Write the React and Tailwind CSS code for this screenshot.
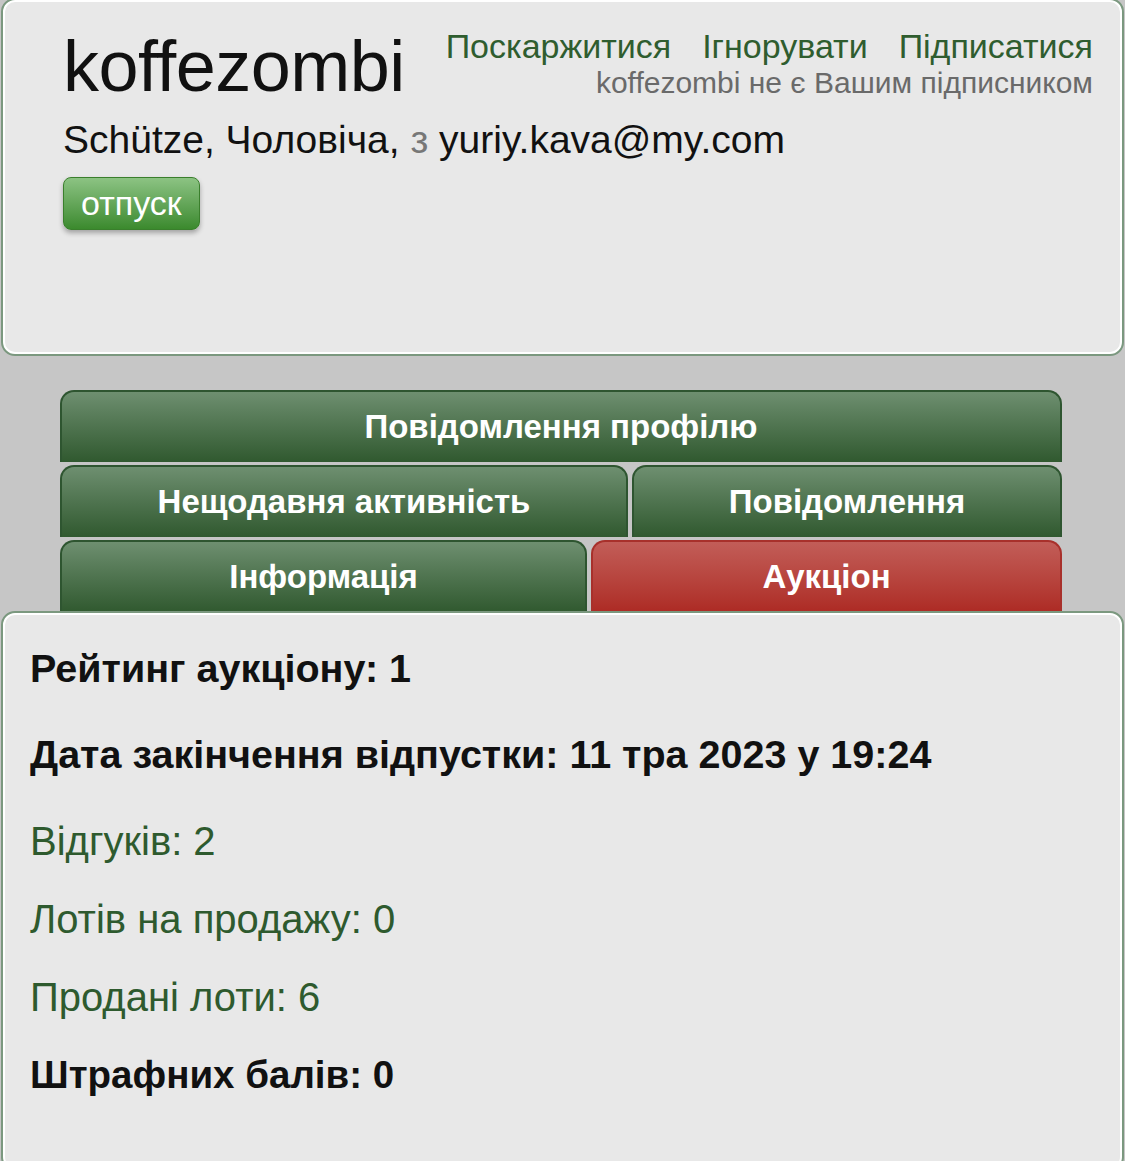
import React from "react";

const font = { fontFamily: '"Liberation Sans", Arial, sans-serif' };

const Tab = ({ label, active, className = "" }) => (
  <div
    className={`${className} h-[72px] flex items-center justify-center rounded-t-[14px] border-2 border-b-0 text-white font-bold text-[33px] ${
      active
        ? "border-[#a8302b] bg-gradient-to-b from-[#c25d58] to-[#ad2a24]"
        : "border-[#2e5530] bg-gradient-to-b from-[#6e8f70] to-[#30592f]"
    }`}
  >
    {label}
  </div>
);

const Panel = ({ className = "", children }) => (
  <div className={`${className} rounded-[14px] border-2 border-[#7b987f] bg-[#7b987f]`}>
    <div className="h-full rounded-[12px] border-2 border-white bg-[#e8e8e8]">{children}</div>
  </div>
);

export default function App() {
  return (
    <div style={font} className="w-[1125px] h-[1161px] overflow-hidden bg-[#c6c6c6] flex flex-col">
      {/* PROFILE HEADER */}
      <Panel className="shrink-0 ml-[1px] mr-[1px] -mt-[2px] h-[358px]">
        <div className="pl-[58px] pr-[27px] pt-[25px]">
          <div className="flex justify-between items-start">
            <div className="mt-[3px] text-[72px] leading-none text-[#111] tracking-[-0.5px]">koffezombi</div>
            <div className="text-right">
              <div className="flex gap-[31px] text-[34px] leading-[38px] text-[#2f5d2f]">
                <span>Поскаржитися</span>
                <span>Ігнорувати</span>
                <span>Підписатися</span>
              </div>
              <div className="text-[30px] leading-[36px] text-[#6a6a6a]">koffezombi не є Вашим підписником</div>
            </div>
          </div>
          <div className="mt-[15px] text-[39px] leading-[46px] text-[#111]">
            Schütze, Чоловіча, <span className="text-[#777]">з</span> yuriy.kava@my.com
          </div>
          <div className="mt-[14px] inline-flex items-center h-[53px] px-[17px] rounded-[8px] border border-[#3a7f2c] bg-gradient-to-b from-[#8cc383] to-[#3b8a2d] text-white text-[34px] shadow-[0_3px_5px_rgba(0,0,0,0.3)]">
            отпуск
          </div>
        </div>
      </Panel>

      {/* TABS */}
      <div className="shrink-0 pl-[60px] pr-[63px] pt-[34px] flex flex-col gap-[3px]">
        <Tab label="Повідомлення профілю" />
        <div className="flex gap-[4px]">
          <Tab label="Нещодавня активність" className="w-[568px]" />
          <Tab label="Повідомлення" className="flex-1" />
        </div>
        <div className="flex gap-[4px]">
          <Tab label="Інформація" className="w-[527px]" />
          <Tab label="Аукціон" active className="flex-1" />
        </div>
      </div>

      {/* AUCTION INFO */}
      <Panel className="ml-[1px] mr-[1px] -mt-[1px] flex-1 min-h-[560px]">
        <div className="px-[25px] pt-[28px] text-[#111]">
          <div className="h-[86px] font-bold text-[39.5px] leading-[50px]">Рейтинг аукціону: 1</div>
          <div className="h-[87px] font-bold text-[39.5px] leading-[50px]">Дата закінчення відпустки: 11 тра 2023 у 19:24</div>
          <div className="h-[78px] text-[40px] leading-[50px] text-[#2e5a2e]">Відгуків: 2</div>
          <div className="h-[78px] text-[40px] leading-[50px] text-[#2e5a2e]">Лотів на продажу: 0</div>
          <div className="h-[78px] text-[40px] leading-[50px] text-[#2e5a2e]">Продані лоти: 6</div>
          <div className="h-[78px] font-bold text-[38.5px] leading-[50px]">Штрафних балів: 0</div>
        </div>
      </Panel>
    </div>
  );
}
